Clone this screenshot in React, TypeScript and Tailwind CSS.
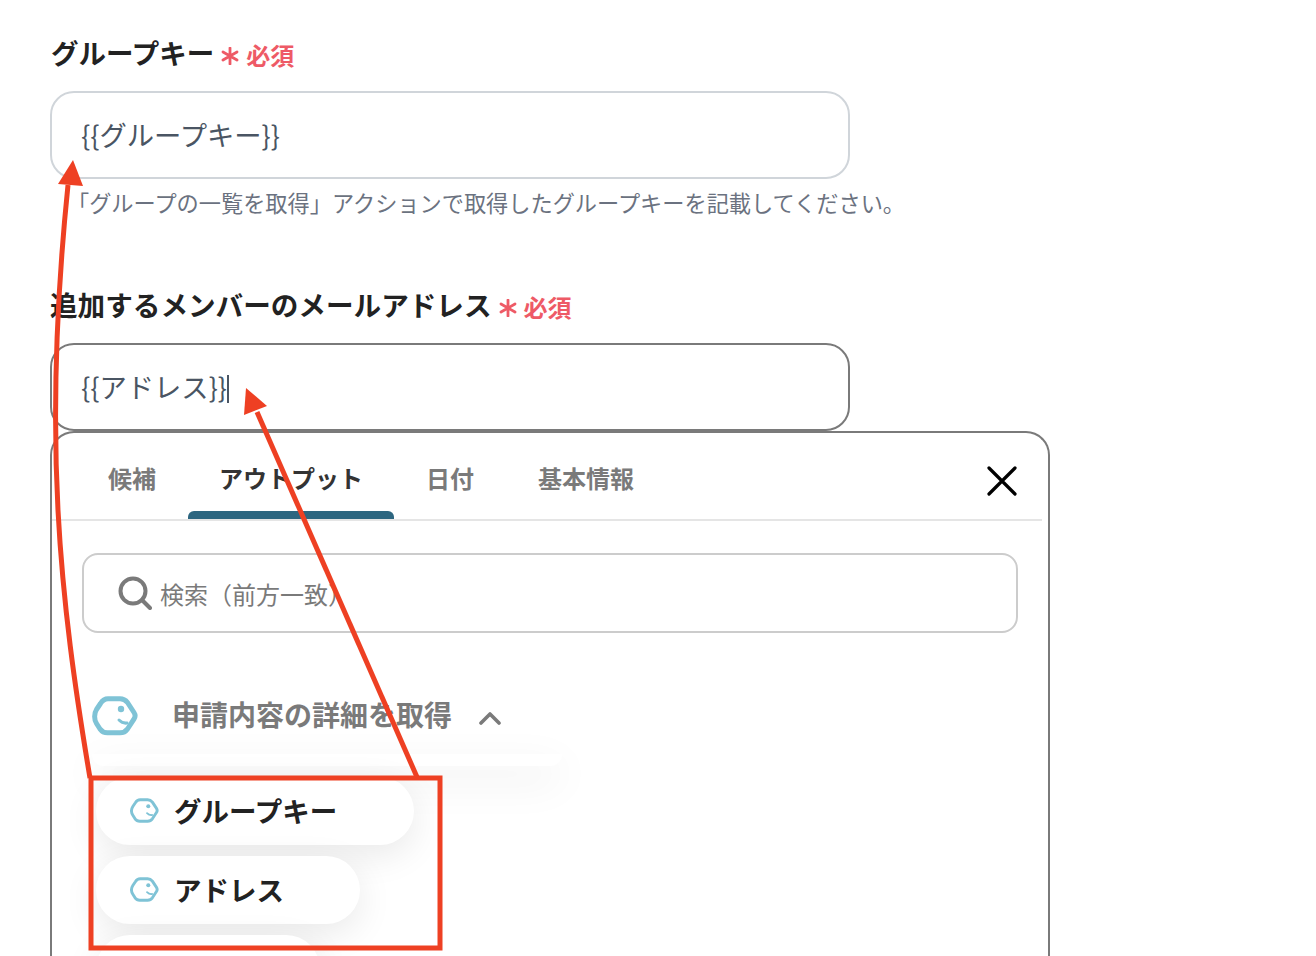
const font = { fontFamily: '"Noto Sans CJK JP", "Noto Sans", sans-serif' };

const YoomIcon = ({ size, stroke }: { size: number; stroke: number }) => (
  <svg width={size} height={size * 0.87} viewBox="0 0 46 40" fill="none">
    <path
      d="M16 2.800 H28 C31.500 2.800 33.500 4 35.500 6.500 L42 16.500 C43.500 18.800 43.500 20.800 42 23 L35.500 33 C33.500 35.800 31.500 36.800 28 36.800 H15.500 C12 36.800 9.800 35.500 8 33 L4.500 27.500 C2 23.500 2 17.500 4.500 13.500 L8.500 7.500 C10.500 4.300 12.500 2.800 16 2.800 Z"
      stroke="#7fc3d6"
      strokeWidth={stroke}
      strokeLinejoin="round"
    />
    <circle cx="29" cy="13" r="3.200" fill="#7fc3d6" />
    <path d="M27 24 C29.500 26.500 32 27.500 35 27" stroke="#7fc3d6" strokeWidth="3" strokeLinecap="round" />
  </svg>
);

const Required = () => (
  <span className="flex items-center gap-[7px] text-[#ee5a66] font-bold text-[24px] leading-none ml-[7px] mt-[3px]">
    <svg width="18" height="18" viewBox="0 0 18 18" className="mt-[3px]" stroke="#ee5a66" strokeWidth="2.8" strokeLinecap="round">
      <path d="M9 1 V17 M2 5 L16 13 M16 5 L2 13" />
    </svg>
    必須
  </span>
);

const Chip = ({ label, width }: { label: string; width: string }) => (
  <div className={`${width} h-[68px] shrink-0 bg-white rounded-[34px] shadow-[0_10px_36px_rgba(0,0,0,0.09)] flex items-center pl-[34px] gap-[15px]`}>
    <YoomIcon size={29} stroke={4.6} />
    <span className="text-[27.5px] font-bold text-[#222222] leading-none">{label}</span>
  </div>
);

const Tab = ({ label, active, className }: { label: string; active?: boolean; className: string }) => (
  <div className={`relative h-full flex items-center justify-center pt-[3px] whitespace-nowrap text-[24px] font-bold leading-none ${active ? "text-[#333333]" : "text-[#7a7a7a]"} ${className}`}>
    {label}
    {active && <div className="absolute left-0 right-0 bottom-0 h-[8px] rounded-t-[6px] bg-[#2d6680]" />}
  </div>
);

export default function App() {
  return (
    <div className="relative w-[1316px] h-[956px] overflow-hidden bg-white pl-[50px] pt-[33px]" style={font}>
      <div className="flex items-center h-[40px]">
        <span className="text-[27.5px] font-bold text-[#222222] leading-none ml-px">グループキー</span>
        <Required />
      </div>
      <div className="mt-[18px] w-[800px] h-[88px] rounded-[24px] border-2 border-[#d0d5da] flex items-center pl-[29px] text-[27.3px] text-[#4a5563] leading-none">
        {"{{グループキー}}"}
      </div>
      <p className="mt-[8px] ml-[17px] text-[22.2px] leading-[30px] text-[#6b7280] whitespace-nowrap">
        「グループの一覧を取得」アクションで取得したグループキーを記載してください。
      </p>

      <div className="mt-[68px] flex items-center h-[40px]">
        <span className="text-[27.6px] font-bold text-[#222222] leading-none">追加するメンバーのメールアドレス</span>
        <Required />
      </div>
      <div className="mt-[18px] w-[800px] h-[88px] rounded-[24px] border-2 border-[#7a7a7a] flex items-center pl-[29px] text-[27.3px] text-[#4a5563] leading-none">
        {"{{アドレス}}"}
        <span className="w-[2px] h-[28px] bg-[#4a5563] mt-[3px]" />
      </div>

      <div className="w-[1000px] h-[700px] rounded-[24px] border-2 border-b-0 border-[#7a7a7a] bg-white pl-[30px] pr-[6px]">
        <div className="-ml-[30px] flex h-[88px] items-center border-b-2 border-[#e5e5e5] relative">
          <Tab label="候補" className="ml-[56px] w-[48px]" />
          <Tab label="アウトプット" active className="ml-[32px] w-[206px]" />
          <Tab label="日付" className="ml-[32px] w-[48px]" />
          <Tab label="基本情報" className="ml-[64px] w-[96px]" />
          <svg className="absolute right-[25px] top-[33px]" width="30" height="30" viewBox="0 0 30 30" stroke="#000000" strokeWidth="3.2" strokeLinecap="round">
            <path d="M2 2 L28 28 M28 2 L2 28" />
          </svg>
        </div>

        <div className="mt-[32px] w-[936px] h-[80px] rounded-[16px] border-2 border-[#cccccc] flex items-center pl-[34px] gap-[8px]">
          <svg width="34" height="34" viewBox="0 0 34 34" fill="none" stroke="#7a7a7a" strokeWidth="4" strokeLinecap="round">
            <circle cx="15" cy="15" r="12.5" />
            <path d="M24 24 L32 32" />
          </svg>
          <span className="text-[24px] text-[#7a7a7a] leading-none mt-[1px]">検索（前方一致）</span>
        </div>

        <div className="relative mt-[60px] ml-[10px] flex items-center h-[46px] w-[460px]">
          <YoomIcon size={46} stroke={5} />
          <span className="ml-[34px] text-[28px] font-bold text-[#7a7a7a] leading-none -mt-[4px]">申請内容の詳細を取得</span>
          <svg className="ml-[27px] mt-[3px]" width="22" height="14" viewBox="0 0 22 14" fill="none" stroke="#7a7a7a" strokeWidth="3.6" strokeLinecap="round" strokeLinejoin="round">
            <path d="M2 12 L11 3 L20 12" />
          </svg>
        </div>
        <div className="ml-[10px] mt-[15px] w-[470px] h-[12px] rounded-b-[30px] shadow-[0_14px_40px_rgba(0,0,0,0.1)]" />

        <div className="mt-[11px] ml-[14px] flex flex-col gap-[11px] items-start">
          <Chip label="グループキー" width="w-[318px]" />
          <Chip label="アドレス" width="w-[264px]" />
          <Chip label="" width="w-[224px]" />
        </div>
      </div>

      {/* 赤い注釈 */}
      <svg className="absolute left-0 top-0 pointer-events-none" width="1316" height="956" fill="none">
        <rect x="91" y="778" width="349" height="170" stroke="#ee4023" strokeWidth="5" />
        <path d="M90 778 C60 600 42 440 68 185" stroke="#ee4023" strokeWidth="5" />
        <path d="M73 160 L58 184 L83 186 Z" fill="#ee4023" />
        <path d="M417 777 L257 412" stroke="#ee4023" strokeWidth="5" />
        <path d="M246 388 L244 415 L267 406 Z" fill="#ee4023" />
      </svg>
    </div>
  );
}
